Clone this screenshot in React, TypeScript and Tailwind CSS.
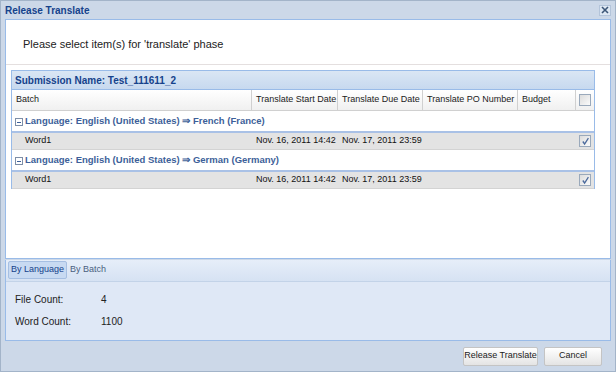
import React from "react";

const font = { fontFamily: "'Liberation Sans', Arial, sans-serif" };

function CheckBox({ checked }: { checked?: boolean }) {
  return (
    <div className="w-[12px] h-[12px] border border-[#9aa9bb] bg-gradient-to-br from-[#dcdcdc] to-[#fbfbfb] flex items-center justify-center">
      {checked && (
        <svg width="9" height="9" viewBox="0 0 9 9">
          <path d="M1.8 4.5 L3.6 7 L7.4 1.2" stroke="#4c6a9c" strokeWidth="1.3" fill="none" />
        </svg>
      )}
    </div>
  );
}

const cols = [
  { label: "Batch", w: "w-[240px]" },
  { label: "Translate Start Date", w: "w-[86px]" },
  { label: "Translate Due Date", w: "w-[85px]" },
  { label: "Translate PO Number", w: "w-[95px]" },
  { label: "Budget", w: "w-[58px]" },
];

const groups = [
  { lang: "Language: English (United States) ⇒ French (France)" },
  { lang: "Language: English (United States) ⇒ German (Germany)" },
];

function GroupRows({ lang }: { lang: string }) {
  return (
    <>
      <div className="h-[20px] mt-[2px] flex items-end pb-[3px] pl-[3px] border-b-2 border-[#a9c1e6] text-[9.5px] font-bold text-[#3d5f99] gap-[2px] whitespace-nowrap">
        <div className="w-[8px] h-[8px] border border-[#7d8ea8] mb-[2px] flex items-center justify-center">
          <div className="w-[4px] h-px bg-[#3d5f99]" />
        </div>
        <span>{lang}</span>
      </div>
      <div className="h-[17px] flex items-center bg-[#e3e3e3] border-b border-[#d3d3d3] text-[9px] text-[#111] whitespace-nowrap">
        <div className="w-[240px] pl-[13px]">Word1</div>
        <div className="w-[86px] pl-[4px]">Nov. 16, 2011 14:42</div>
        <div className="w-[85px] pl-[4px]">Nov. 17, 2011 23:59</div>
        <div className="w-[95px]" />
        <div className="w-[58px]" />
        <div className="flex-1 flex justify-center">
          <CheckBox checked />
        </div>
      </div>
    </>
  );
}

export default function App() {
  return (
    <div
      className="w-[616px] h-[372px] bg-[#ccd8e8] border border-[#a3b4c9] flex flex-col overflow-hidden"
      style={font}
    >
      {/* title bar */}
      <div className="h-[18px] flex items-center justify-between pl-[4px] pr-[4px]">
        <span className="text-[10px] font-bold text-[#15428b]">Release Translate</span>
        <div className="w-[12px] h-[11px] flex items-center justify-center border border-[#b3c4da] bg-[#dde7f3]">
          <svg width="8" height="8" viewBox="0 0 8 8">
            <path d="M1 1 L7 7 M7 1 L1 7" stroke="#3c5678" strokeWidth="1.6" />
          </svg>
        </div>
      </div>

      {/* white body */}
      <div className="mx-[4px] h-[240px] bg-white border border-[#99bbe8] flex flex-col">
        <div className="h-[44px] pl-[17px] pt-[16px] text-[11px] text-[#222]">
          Please select item(s) for 'translate' phase
        </div>
        <div className="h-px bg-[#e4dfdf]" />
        <div className="ml-[5px] mr-[15px] mt-[5px] border border-[#99bbe8] border-b-0">
          <div className="h-[19px] flex items-center pl-[3px] bg-gradient-to-b from-[#dae6f4] to-[#c7d9ef] border-b border-[#99bbe8] text-[10px] font-bold text-[#15428b]">
            Submission Name: Test_111611_2
          </div>
          <div className="h-[21px] flex bg-gradient-to-b from-[#ffffff] to-[#f0f0f0] border-b border-[#d0d0d0] text-[9px] text-[#222] whitespace-nowrap">
            {cols.map((c) => (
              <div key={c.label} className={`${c.w} flex items-center pl-[4px] border-r border-[#d0d0d0]`}>
                {c.label}
              </div>
            ))}
            <div className="flex-1 flex items-center justify-center">
              <CheckBox />
            </div>
          </div>
          {groups.map((g) => (
            <GroupRows key={g.lang} lang={g.lang} />
          ))}
        </div>
      </div>

      {/* tabs */}
      <div className="mx-[4px] mt-px border border-[#99bbe8] border-t-0 bg-[#dfe8f6] flex flex-col">
        <div className="h-[22px] flex items-end pl-[2px] bg-gradient-to-b from-[#e6eef9] to-[#d6e2f3] border-b border-[#c3d3e8] text-[9px]">
          <div className="h-[18px] px-[2px] mb-[2px] flex items-center bg-[#c8daf2] border border-[#a6bfe2] rounded-[2px] text-[#15428b]">
            By Language
          </div>
          <div className="h-[18px] px-[3px] mb-[2px] flex items-center text-[#4a5f80]">By Batch</div>
        </div>
        <div className="h-[58px] pl-[9px] pt-[10px] text-[10px] text-[#222] flex flex-col gap-[7px]">
          <div className="flex">
            <span className="w-[86px]">File Count:</span>
            <span>4</span>
          </div>
          <div className="flex">
            <span className="w-[86px]">Word Count:</span>
            <span>1100</span>
          </div>
        </div>
      </div>

      {/* buttons */}
      <div className="flex-1 flex justify-end items-center gap-[6px] pr-[13px]">
        <button className="h-[19px] w-[75px] text-[9px] text-[#222] border border-[#c4c4c4] bg-gradient-to-b from-[#ffffff] to-[#e4e4e4] rounded-[2px]">
          Release Translate
        </button>
        <button className="h-[19px] w-[58px] text-[9px] text-[#222] border border-[#c4c4c4] bg-gradient-to-b from-[#ffffff] to-[#e4e4e4] rounded-[2px]">
          Cancel
        </button>
      </div>
    </div>
  );
}
